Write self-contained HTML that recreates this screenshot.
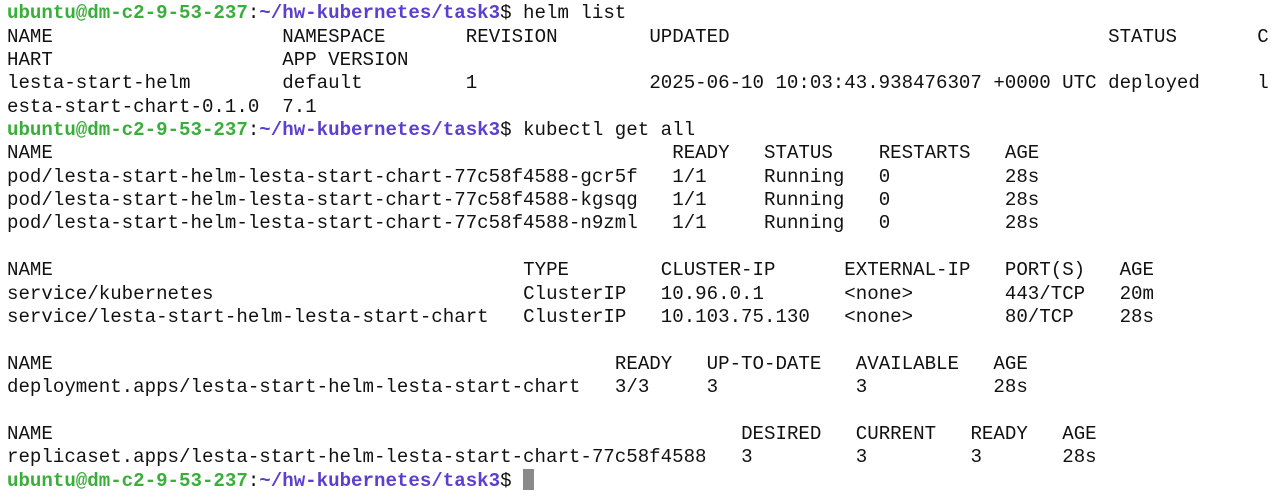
<!DOCTYPE html>
<html><head><meta charset="utf-8"><style>
html,body{margin:0;padding:0;background:#fff;}
body{width:1280px;height:499px;overflow:hidden;position:relative;font-family:"Liberation Mono",monospace;font-size:19.12px;color:#111;}
.l{position:absolute;left:0;height:23.35px;line-height:23.35px;width:1280px;white-space:pre;}
.l span{position:absolute;left:calc(var(--c,0)*11.47px + 7px);}
.g{color:#3aae3a;font-weight:bold;}
.b{color:#5a3fd0;font-weight:bold;}
.cur{display:inline-block;width:11px;height:21px;background:#8a8a8a;vertical-align:-4px;}
</style></head><body>
<div class="l" style="top:-21px"><span style="--c:0">  p</span></div>
<div class="l" style="top:2.3px"><span><b class="g">ubuntu@dm-c2-9-53-237</b>:<b class="b">~/hw-kubernetes/task3</b>$ helm list</span></div>
<div class="l" style="top:25.65px"><span>NAME</span><span style="--c:24">NAMESPACE</span><span style="--c:40">REVISION</span><span style="--c:56">UPDATED</span><span style="--c:96">STATUS</span><span style="--c:109">C</span></div>
<div class="l" style="top:49px"><span>HART</span><span style="--c:24">APP VERSION</span></div>
<div class="l" style="top:72.35px"><span>lesta-start-helm</span><span style="--c:24">default</span><span style="--c:40">1</span><span style="--c:56">2025-06-10 10:03:43.938476307 +0000 UTC</span><span style="--c:96">deployed</span><span style="--c:109">l</span></div>
<div class="l" style="top:95.7px"><span>esta-start-chart-0.1.0</span><span style="--c:24">7.1</span></div>
<div class="l" style="top:119.05px"><span><b class="g">ubuntu@dm-c2-9-53-237</b>:<b class="b">~/hw-kubernetes/task3</b>$ kubectl get all</span></div>
<div class="l" style="top:142.4px"><span>NAME</span><span style="--c:58">READY</span><span style="--c:66">STATUS</span><span style="--c:76">RESTARTS</span><span style="--c:87">AGE</span></div>
<div class="l" style="top:165.75px"><span>pod/lesta-start-helm-lesta-start-chart-77c58f4588-gcr5f</span><span style="--c:58">1/1</span><span style="--c:66">Running</span><span style="--c:76">0</span><span style="--c:87">28s</span></div>
<div class="l" style="top:189.1px"><span>pod/lesta-start-helm-lesta-start-chart-77c58f4588-kgsqg</span><span style="--c:58">1/1</span><span style="--c:66">Running</span><span style="--c:76">0</span><span style="--c:87">28s</span></div>
<div class="l" style="top:212.45px"><span>pod/lesta-start-helm-lesta-start-chart-77c58f4588-n9zml</span><span style="--c:58">1/1</span><span style="--c:66">Running</span><span style="--c:76">0</span><span style="--c:87">28s</span></div>
<div class="l" style="top:259.15px"><span>NAME</span><span style="--c:45">TYPE</span><span style="--c:57">CLUSTER-IP</span><span style="--c:73">EXTERNAL-IP</span><span style="--c:87">PORT(S)</span><span style="--c:97">AGE</span></div>
<div class="l" style="top:282.5px"><span>service/kubernetes</span><span style="--c:45">ClusterIP</span><span style="--c:57">10.96.0.1</span><span style="--c:73">&lt;none&gt;</span><span style="--c:87">443/TCP</span><span style="--c:97">20m</span></div>
<div class="l" style="top:305.85px"><span>service/lesta-start-helm-lesta-start-chart</span><span style="--c:45">ClusterIP</span><span style="--c:57">10.103.75.130</span><span style="--c:73">&lt;none&gt;</span><span style="--c:87">80/TCP</span><span style="--c:97">28s</span></div>
<div class="l" style="top:352.55px"><span>NAME</span><span style="--c:53">READY</span><span style="--c:61">UP-TO-DATE</span><span style="--c:74">AVAILABLE</span><span style="--c:86">AGE</span></div>
<div class="l" style="top:375.9px"><span>deployment.apps/lesta-start-helm-lesta-start-chart</span><span style="--c:53">3/3</span><span style="--c:61">3</span><span style="--c:74">3</span><span style="--c:86">28s</span></div>
<div class="l" style="top:422.6px"><span>NAME</span><span style="--c:64">DESIRED</span><span style="--c:74">CURRENT</span><span style="--c:84">READY</span><span style="--c:92">AGE</span></div>
<div class="l" style="top:445.95px"><span>replicaset.apps/lesta-start-helm-lesta-start-chart-77c58f4588</span><span style="--c:64">3</span><span style="--c:74">3</span><span style="--c:84">3</span><span style="--c:92">28s</span></div>
<div class="l" style="top:469.3px"><span><b class="g">ubuntu@dm-c2-9-53-237</b>:<b class="b">~/hw-kubernetes/task3</b>$ <i class="cur"></i></span></div>
</body></html>
